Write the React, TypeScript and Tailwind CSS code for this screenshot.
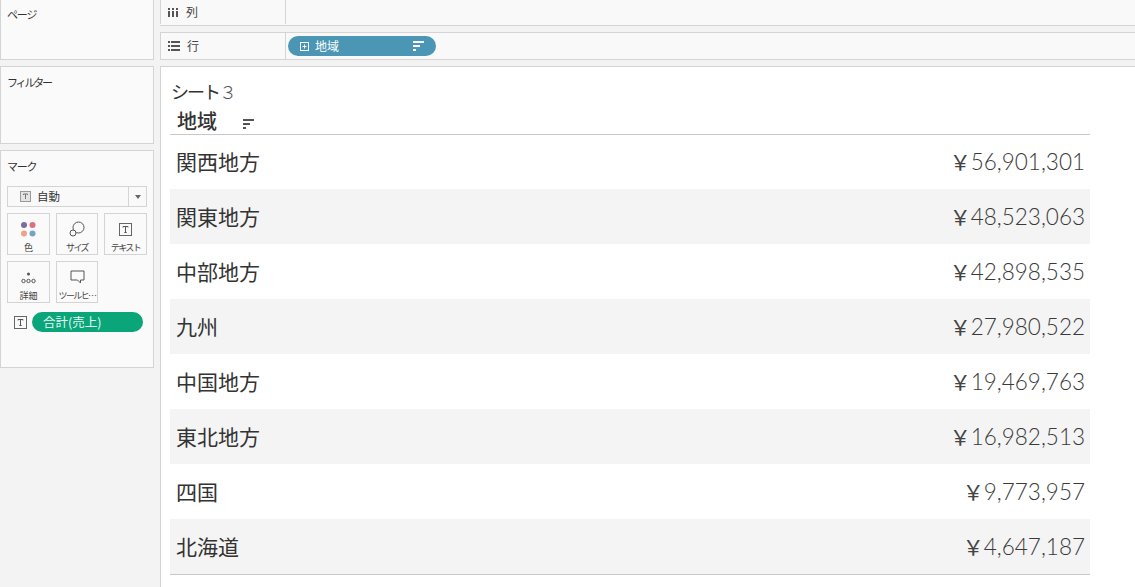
const jp = "font-['Noto_Sans_CJK_JP','Noto_Sans',sans-serif]";

const rows = [
  { name: "関西地方", value: "56,901,301" },
  { name: "関東地方", value: "48,523,063" },
  { name: "中部地方", value: "42,898,535" },
  { name: "九州", value: "27,980,522" },
  { name: "中国地方", value: "19,469,763" },
  { name: "東北地方", value: "16,982,513" },
  { name: "四国", value: "9,773,957" },
  { name: "北海道", value: "4,647,187" },
];

function TextIcon({ size = 13 }: { size?: number }) {
  return (
    <svg width={size} height={size} viewBox="0 0 13 13" fill="none">
      <rect x="0.5" y="0.5" width="12" height="12" fill="none" stroke="#666" />
      <path d="M4 4.5V3.5H9V4.5M6.5 3.5V9.5M5.3 9.5H7.7" stroke="#555" />
    </svg>
  );
}

function SortIcon({ color }: { color: string }) {
  return (
    <svg width="12" height="11" viewBox="0 0 12 11" fill={color}>
      <rect x="0" y="0" width="11" height="2" />
      <rect x="0" y="4" width="7" height="2" />
      <rect x="0" y="8" width="3" height="2" />
    </svg>
  );
}

function MarkCard({ label, kana, children }: { label: string; kana?: boolean; children: React.ReactNode }) {
  return (
    <div className="flex h-[42px] flex-col items-center border border-[#d4d4d4] bg-[#fafafa]">
      <div className="flex h-[28px] items-center justify-center pt-[2px]">{children}</div>
      <div className={`whitespace-nowrap text-[9px] leading-[12px] text-[#444] ${kana ? "tracking-[-1.6px]" : ""}`}>{label}</div>
    </div>
  );
}

function Card({ title, className, titleClass, children }: { title: string; className: string; titleClass: string; children?: React.ReactNode }) {
  return (
    <div className={`w-[154px] border border-[#d4d4d4] bg-[#fafafa] ${className}`}>
      <div className={`pl-[6px] text-[11px] leading-[16px] text-[#333] ${titleClass}`}>{title}</div>
      {children}
    </div>
  );
}

function Shelf({ icon, label, className, children }: { icon: React.ReactNode; label: string; className: string; children?: React.ReactNode }) {
  return (
    <div className={`flex border-b border-[#d4d4d4] bg-[#f9f9f9] ${className}`}>
      <div className="flex w-[126px] items-center gap-[7px] border-x border-[#d4d4d4] pl-[7px] text-[12px] text-[#444]">
        {icon}
        <span>{label}</span>
      </div>
      <div className="flex flex-1 items-center pl-[2px]">{children}</div>
    </div>
  );
}

export default function App() {
  return (
    <div className={`flex h-[587px] w-[1135px] gap-[6px] overflow-hidden bg-[#f3f3f3] ${jp}`}>
      <div className="flex w-[154px] flex-col gap-[6px]">
        <Card title="ページ" titleClass="pt-[6px] tracking-[-1.2px]" className="h-[60px] border-t-0" />
        <Card title="フィルター" titleClass="pt-[7px] tracking-[-2.2px]" className="h-[78px]" />
        <Card title="マーク" titleClass="pt-[7px] tracking-[-1.2px]" className="h-[218px]">
          <div className="mx-[6px] mt-[12px] flex h-[21px] w-[140px] items-center border border-[#d4d4d4] bg-[#f9f9f9]">
            <div className="flex flex-1 items-center gap-[6px] pl-[12px] text-[11.5px] text-[#333]">
              <svg width="11" height="11" viewBox="0 0 11 11" fill="none">
                <rect x="0.5" y="0.5" width="10" height="10" fill="#e4e4e4" stroke="#999" />
                <path d="M3.5 4V3H7.5V4M5.5 3V8" stroke="#777" />
              </svg>
              <span>自動</span>
            </div>
            <div className="flex h-full w-[18px] items-center justify-center border-l border-[#d4d4d4]">
              <div className="h-0 w-0 border-x-[3.5px] border-t-[4px] border-x-transparent border-t-[#666]" />
            </div>
          </div>
          <div className="ml-[6px] mt-[6px] grid w-[140px] grid-cols-[43px_42px_43px] gap-[6px]">
            <MarkCard label="色">
              <svg width="15" height="15" viewBox="0 0 15 15">
                <circle cx="3" cy="3" r="3" fill="#7c6ba0" />
                <circle cx="11.5" cy="3" r="3" fill="#e26d7e" />
                <circle cx="3" cy="11.5" r="3" fill="#eea384" />
                <circle cx="11.5" cy="11.5" r="3" fill="#76a2c6" />
              </svg>
            </MarkCard>
            <MarkCard label="サイズ" kana>
              <svg width="16" height="16" viewBox="0 0 16 16" fill="none" stroke="#555">
                <circle cx="9.5" cy="6.5" r="5.5" />
                <circle cx="4" cy="12" r="3" fill="#fafafa" />
              </svg>
            </MarkCard>
            <MarkCard label="テキスト" kana>
              <TextIcon />
            </MarkCard>
            <MarkCard label="詳細">
              <svg width="15" height="15" viewBox="0 0 15 15" fill="none" stroke="#555">
                <circle cx="7.5" cy="4" r="1.5" fill="#555" stroke="none" />
                <circle cx="2.5" cy="11" r="1.7" />
                <circle cx="7.5" cy="11" r="1.7" />
                <circle cx="12.5" cy="11" r="1.7" />
              </svg>
            </MarkCard>
            <MarkCard label="ツールヒ…" kana>
              <svg width="15" height="14" viewBox="0 0 15 14" fill="none" stroke="#555">
                <path d="M1 1H14V10H10.5V13L7.5 10H1Z" />
              </svg>
            </MarkCard>
          </div>
          <div className="mt-[9px] flex items-center gap-[5px] pl-[13px]">
            <TextIcon />
            <div className="flex h-[20px] w-[111px] items-center rounded-full bg-[#0aa67a] pl-[11px] text-[12.5px] text-[#e8f7f2]">
              合計(売上)
            </div>
          </div>
        </Card>
      </div>

      <div className="flex min-w-0 flex-1 flex-col">
        <Shelf
          label="列"
          className="h-[26px] pb-[1px]"
          icon={
            <svg width="11" height="9" viewBox="0 0 11 9" fill="#555">
              <rect x="0" y="3" width="2" height="6" />
              <rect x="4" y="3" width="2" height="6" />
              <rect x="8" y="3" width="2" height="6" />
              <rect x="0" y="0" width="2" height="2" />
              <rect x="4" y="0" width="2" height="2" />
              <rect x="8" y="0" width="2" height="2" />
            </svg>
          }
        />
        <Shelf
          label="行"
          className="mt-[6px] h-[28px] border-t border-t-[#d4d4d4]"
          icon={
            <svg width="12" height="10" viewBox="0 0 12 10" fill="#555">
              <rect x="0" y="0" width="2" height="2" />
              <rect x="3" y="0" width="9" height="2" />
              <rect x="0" y="4" width="2" height="2" />
              <rect x="3" y="4" width="9" height="2" />
              <rect x="0" y="8" width="2" height="2" />
              <rect x="3" y="8" width="9" height="2" />
            </svg>
          }
        >
          <div className="flex h-[20px] w-[148px] items-center rounded-full bg-[#4a96b4] pl-[12px] pr-[11px] text-[12px] text-white">
            <svg width="9" height="9" viewBox="0 0 9 9" fill="none" stroke="#fff">
              <rect x="0.5" y="0.5" width="8" height="8" />
              <path d="M2.5 4.5H6.5M4.5 2.5V6.5" />
            </svg>
            <span className="ml-[6px] flex-1">地域</span>
            <SortIcon color="#fff" />
          </div>
        </Shelf>

        <div className="mt-[6px] flex-1 border-l border-t border-[#d4d4d4] bg-white pl-[9px]">
          <div className="h-[24px] pl-[1px] pt-[12px] text-[18px] leading-[24px] tracking-[-2px] text-[#333]">
            シート<span className="font-light text-[#555]">３</span>
          </div>
          <div className="mt-[13px] flex h-[31px] w-[920px] items-center border-b border-[#c8c8c8] pl-[7px]">
            <span className="w-[66px] pt-[3px] text-[20px] leading-[24px] font-medium text-[#333]">地域</span>
            <span className="pt-[10px]">
              <SortIcon color="#555" />
            </span>
          </div>
          <div className="w-[920px] border-b border-[#c8c8c8]">
            {rows.map((row, i) => (
              <div
                key={row.name}
                className={`flex items-center justify-between pl-[6px] pr-[5px] ${i === 0 ? "h-[54px]" : "h-[55px]"} ${i % 2 === 1 ? "bg-[#f4f4f4]" : "bg-white"}`}
              >
                <span className="text-[21px] text-[#333]">{row.name}</span>
                <span className="flex items-center font-['Lato',sans-serif] text-[22.5px] font-light text-[#3a3a3a]">
                  <span className={`${jp} text-[21px] font-normal text-[#444]`}>￥</span>
                  {row.value}
                </span>
              </div>
            ))}
          </div>
        </div>
      </div>
    </div>
  );
}
